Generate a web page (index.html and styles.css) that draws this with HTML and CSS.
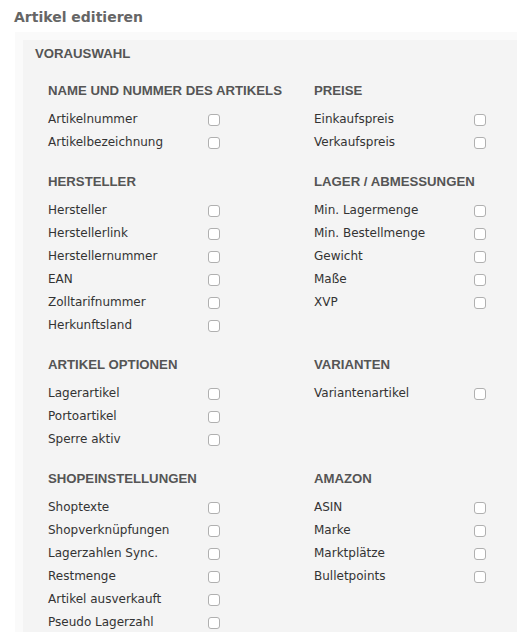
FILE: index.html
```html
<!DOCTYPE html>
<html lang="de">
<head>
<meta charset="utf-8">
<title>Artikel editieren</title>
<link rel="stylesheet" href="styles.css">
</head>
<body>
<h1 class="title">Artikel editieren</h1>
<div class="outer">
  <div class="inner">
    <h2 class="panel-title">VORAUSWAHL</h2>
    <div class="grid">
      <section class="group">
        <h3 class="group-title">NAME UND NUMMER DES ARTIKELS</h3>
        <label class="item"><span>Artikelnummer</span><span class="cb"></span></label>
        <label class="item"><span>Artikelbezeichnung</span><span class="cb"></span></label>
      </section>
      <section class="group">
        <h3 class="group-title">PREISE</h3>
        <label class="item"><span>Einkaufspreis</span><span class="cb"></span></label>
        <label class="item"><span>Verkaufspreis</span><span class="cb"></span></label>
      </section>
      <section class="group">
        <h3 class="group-title">HERSTELLER</h3>
        <label class="item"><span>Hersteller</span><span class="cb"></span></label>
        <label class="item"><span>Herstellerlink</span><span class="cb"></span></label>
        <label class="item"><span>Herstellernummer</span><span class="cb"></span></label>
        <label class="item"><span>EAN</span><span class="cb"></span></label>
        <label class="item"><span>Zolltarifnummer</span><span class="cb"></span></label>
        <label class="item"><span>Herkunftsland</span><span class="cb"></span></label>
      </section>
      <section class="group">
        <h3 class="group-title">LAGER / ABMESSUNGEN</h3>
        <label class="item"><span>Min. Lagermenge</span><span class="cb"></span></label>
        <label class="item"><span>Min. Bestellmenge</span><span class="cb"></span></label>
        <label class="item"><span>Gewicht</span><span class="cb"></span></label>
        <label class="item"><span>Maße</span><span class="cb"></span></label>
        <label class="item"><span>XVP</span><span class="cb"></span></label>
      </section>
      <section class="group">
        <h3 class="group-title">ARTIKEL OPTIONEN</h3>
        <label class="item"><span>Lagerartikel</span><span class="cb"></span></label>
        <label class="item"><span>Portoartikel</span><span class="cb"></span></label>
        <label class="item"><span>Sperre aktiv</span><span class="cb"></span></label>
      </section>
      <section class="group">
        <h3 class="group-title">VARIANTEN</h3>
        <label class="item"><span>Variantenartikel</span><span class="cb"></span></label>
      </section>
      <section class="group">
        <h3 class="group-title">SHOPEINSTELLUNGEN</h3>
        <label class="item"><span>Shoptexte</span><span class="cb"></span></label>
        <label class="item"><span>Shopverknüpfungen</span><span class="cb"></span></label>
        <label class="item"><span>Lagerzahlen Sync.</span><span class="cb"></span></label>
        <label class="item"><span>Restmenge</span><span class="cb"></span></label>
        <label class="item"><span>Artikel ausverkauft</span><span class="cb"></span></label>
        <label class="item"><span>Pseudo Lagerzahl</span><span class="cb"></span></label>
      </section>
      <section class="group">
        <h3 class="group-title">AMAZON</h3>
        <label class="item"><span>ASIN</span><span class="cb"></span></label>
        <label class="item"><span>Marke</span><span class="cb"></span></label>
        <label class="item"><span>Marktplätze</span><span class="cb"></span></label>
        <label class="item"><span>Bulletpoints</span><span class="cb"></span></label>
      </section>
    </div>
  </div>
</div>
</body>
</html>
```
FILE: styles.css
```css
html, body {
  margin: 0;
  padding: 0;
  background: #ffffff;
}
body {
  font-family: "DejaVu Sans", Verdana, sans-serif;
  color: #333333;
}
.title {
  margin: 0;
  padding: 8px 0 0 14px;
  height: 24px;
  font-family: "DejaVu Sans", Verdana, sans-serif;
  font-weight: bold;
  font-size: 14px;
  line-height: 18px;
  color: #666666;
}
.outer {
  margin-left: 15px;
  padding: 8px 0 0 8px;
  background: #fafafa;
}
.inner {
  background: #f4f4f4;
  padding: 6px 0 0 12px;
  height: 586px;
  overflow: hidden;
}
.panel-title, .group-title {
  margin: 0;
  font-family: "Liberation Sans", Arial, sans-serif;
  font-weight: bold;
  font-size: 13.2px;
  line-height: 16px;
  color: #555555;
}
.grid {
  margin: 21px 0 0 13px;
  display: grid;
  grid-template-columns: 266px 266px;
  row-gap: 20px;
}
.group {
  display: flex;
  flex-direction: column;
}
.group-title {
  margin-bottom: 9px;
}
.item {
  display: grid;
  grid-template-columns: 160px 12px;
  align-items: center;
  height: 23px;
  font-size: 12px;
  line-height: 23px;
  color: #333333;
}
.cb {
  box-sizing: border-box;
  width: 12px;
  height: 12px;
  border: 1px solid #b0b0b0;
  border-radius: 3px;
  background: #ffffff;
}
```
